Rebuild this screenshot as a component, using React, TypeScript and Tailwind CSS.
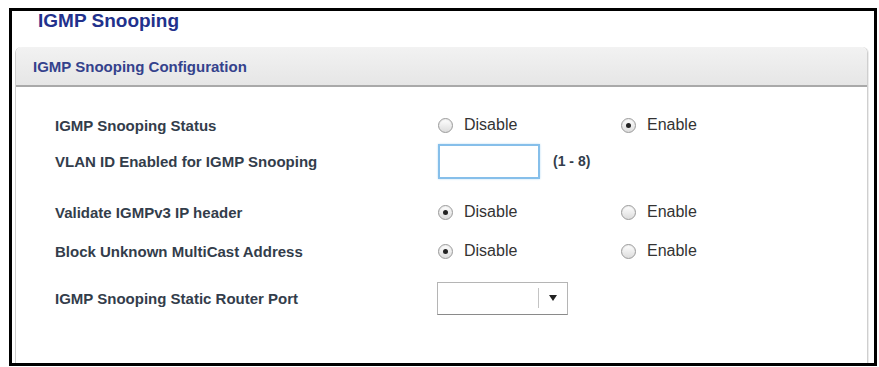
import React from "react";

function Radio({ checked, label }: { checked?: boolean; label: string }) {
  return (
    <div className="flex items-center">
      <span className="flex h-[15px] w-[15px] items-center justify-center rounded-full border border-[#9a9a9a] bg-gradient-to-b from-[#ffffff] to-[#dcdcdc] shadow-[inset_0_1px_1px_rgba(0,0,0,0.08)]">
        {checked && <span className="h-[5px] w-[5px] rounded-full bg-[#222]" />}
      </span>
      <span className="ml-[11px] text-[16px] leading-none text-[#333]">{label}</span>
    </div>
  );
}

function Row({
  label,
  className,
  children,
}: {
  label: string;
  className: string;
  children: React.ReactNode;
}) {
  return (
    <div className={`flex items-center ${className}`}>
      <div className="w-[383px] text-[15px] font-bold leading-none text-[#333d4b]">{label}</div>
      {children}
    </div>
  );
}

function Choice({ first }: { first: "disable" | "enable" }) {
  return (
    <div className="flex items-center">
      <div className="w-[183px]">
        <Radio label="Disable" checked={first === "disable"} />
      </div>
      <Radio label="Enable" checked={first === "enable"} />
    </div>
  );
}

export default function App() {
  return (
    <div className="h-[367px] w-[879px] bg-white pl-[9px] pt-[8px] font-['Liberation_Sans',Arial,sans-serif]">
      <div className="flex h-[358px] w-[868px] flex-col border-[3px] border-t-[3px] border-black">
        <div className="pl-[26px] pt-0 text-[19px] font-bold leading-[19px] text-[#22318c]">IGMP Snooping</div>

        <div className="ml-[3px] mr-[6px] mt-[17px] flex flex-1 flex-col rounded-t-[6px] border-x border-[#cfcfcf] shadow-[1px_0_0_#ececec]">
          <div className="flex h-[40px] items-center rounded-t-[6px] border-b-2 border-[#a9a9a9] bg-gradient-to-b from-[#f2f2f2] to-[#e6e6e6] pl-[17px]">
            <span className="text-[15px] font-bold leading-none text-[#34428c]">IGMP Snooping Configuration</span>
          </div>

          <div className="flex flex-col pl-[39px]">
            <Row label="IGMP Snooping Status" className="mt-[20px] h-[36px]">
              <Choice first="enable" />
            </Row>

            <Row label="VLAN ID Enabled for IGMP Snooping" className="h-[36px]">
              <div className="h-[35px] w-[102px] border-2 border-[#86bfea] bg-white shadow-[0_0_2px_#b9dcf5]" />
              <span className="ml-[13px] text-[14px] font-bold leading-none text-[#333d4b]">(1 - 8)</span>
            </Row>

            <Row label="Validate IGMPv3 IP header" className="mt-[15px] h-[36px]">
              <Choice first="disable" />
            </Row>

            <Row label="Block Unknown MultiCast Address" className="mt-[3px] h-[36px]">
              <Choice first="disable" />
            </Row>

            <Row label="IGMP Snooping Static Router Port" className="mt-[12px] h-[34px]">
              <div className="ml-[-1px] flex h-[33px] w-[131px] items-center border border-[#b5b5b5] border-b-[#8a8a8a] bg-white">
                <div className="flex-1" />
                <div className="h-[20px] w-px bg-[#c4c4c4]" />
                <div className="flex w-[28px] items-center justify-center">
                  <svg width="8" height="6" viewBox="0 0 8 6">
                    <path d="M0 0 L8 0 L4 6 Z" fill="#222" />
                  </svg>
                </div>
              </div>
            </Row>
          </div>
        </div>
      </div>
    </div>
  );
}
